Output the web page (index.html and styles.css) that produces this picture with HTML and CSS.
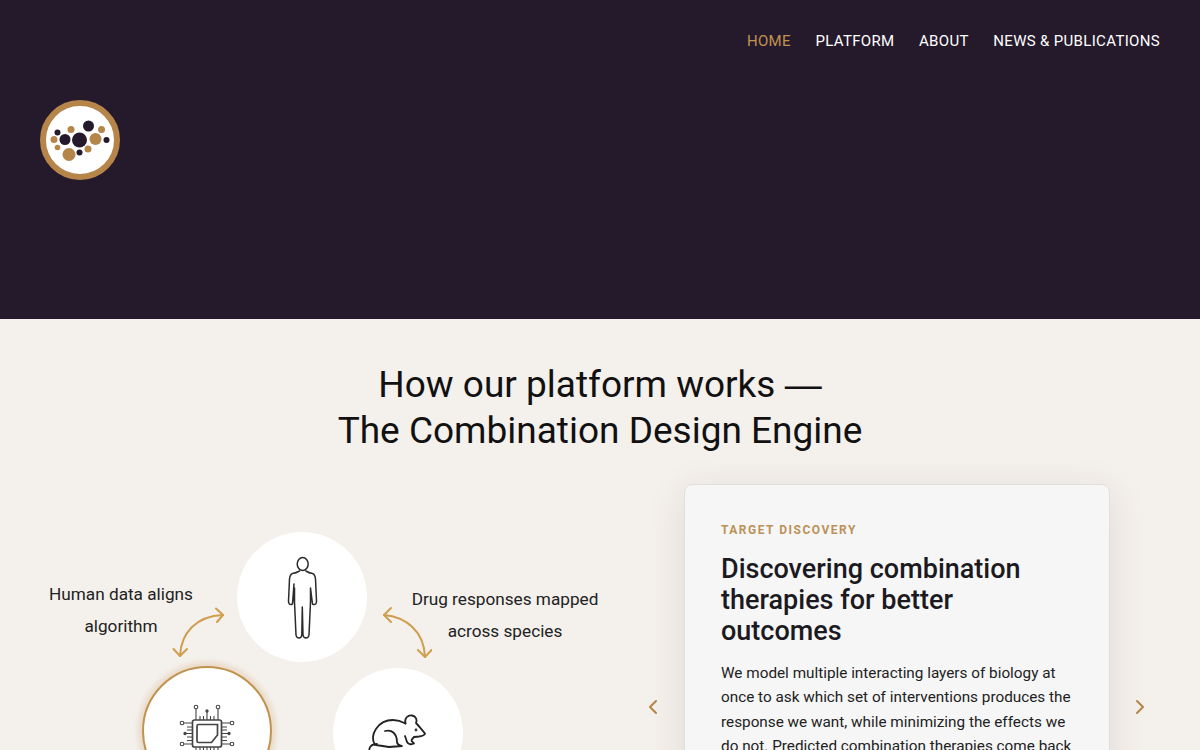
FILE: index.html
```html
<!DOCTYPE html>
<html>
<head>
    <title>How our platform works</title>
    <link rel="stylesheet" href="styles.css">
</head>
<body>
    <header class="site-header">
        <nav class="main-nav">
            <a class="nav-link active" href="#">HOME</a>
            <a class="nav-link" href="#">PLATFORM</a>
            <a class="nav-link" href="#">ABOUT</a>
            <a class="nav-link" href="#">NEWS &amp; PUBLICATIONS</a>
        </nav>
        <svg class="logo" viewBox="0 0 80 80">
            <circle cx="40" cy="40" r="37" fill="#fff" stroke="#b5854a" stroke-width="6"/>
            <circle cx="39.5" cy="40" r="7.5" fill="#251a2b"/>
            <circle cx="48.5" cy="26" r="5.5" fill="#251a2b"/>
            <circle cx="25" cy="39.500" r="5.500" fill="#251a2b"/>
            <circle cx="17.500" cy="32.500" r="3" fill="#251a2b"/>
            <circle cx="66.500" cy="40" r="3" fill="#251a2b"/>
            <circle cx="39.500" cy="52.500" r="3" fill="#251a2b"/>
            <circle cx="31" cy="29.500" r="3.500" fill="#b5854a"/>
            <circle cx="61.500" cy="29.500" r="3.500" fill="#b5854a"/>
            <circle cx="14" cy="39.500" r="3.500" fill="#b5854a"/>
            <circle cx="17.500" cy="47.500" r="2.800" fill="#b5854a"/>
            <circle cx="55.500" cy="39" r="6" fill="#b5854a"/>
            <circle cx="48" cy="49" r="3.500" fill="#b5854a"/>
            <circle cx="29" cy="54.500" r="6.500" fill="#b5854a"/>
        </svg>
    </header>

    <section class="platform">
        <h1 class="platform-title">How our platform works <span class="title-dash">—</span><br>The Combination Design Engine</h1>
        <div class="platform-row">
            <div class="diagram">
                <p class="diagram-label label-left">Human data aligns<br>algorithm</p>
                <p class="diagram-label label-right">Drug responses mapped<br>across species</p>

                <div class="node node-human">
                    <svg class="icon-human" viewBox="0 0 35 87" fill="none" stroke="#2b2b2b" stroke-width="1.500" stroke-linejoin="round" stroke-linecap="round">
                        <ellipse cx="17.700" cy="9" rx="5.500" ry="6.500"/>
                        <path d="M14.500 16 Q11 18 7.500 18.500 Q5 19.500 4.500 24 L3.500 46 Q3.500 50 6.500 49.500 L7.500 49 L9 29 M7.500 49 L9.500 33 L9.500 47 L11 80 Q11.500 83 14 83 Q16.500 83 16.800 80 L17.300 52 L18 80 Q18.500 83 21 83 Q23.500 83 24 80 L25.500 47 L25.500 33 L27.500 49 L28.500 49.500 Q31.500 50 31.500 46 L30.500 24 Q30 19.500 27.500 18.500 Q24 18 20.900 16"/>
                    </svg>
                </div>

                <div class="node node-data">
                    <svg class="icon-chip" viewBox="175 700 64 56" fill="none" stroke="#444" stroke-width="1.100">
                        <rect x="192.500" y="720" width="29" height="27" rx="2" stroke-width="1.700"/>
                        <path d="M198.500 724.500 H217.500 V735 L211.500 742.500 H198.500 Q197 742.500 197 741 V726 Q197 724.500 198.500 724.500 Z" stroke-width="1.700"/>
                        <path d="M196 720 V709 M200 720 V716 M203.500 720 V716 M207 720 V712 M210.500 720 V716 M214 720 V716 M218 720 V709"/>
                        <path d="M196 747 V753 M200 747 V751 M203.500 747 V751 M207 747 V751 M210.500 747 V751 M214 747 V751 M218 747 V753"/>
                        <path d="M192.500 723 H184 M192.500 727 H187 M192.500 730 H187 M192.500 733.500 H186 M192.500 737 H187 M192.500 740.500 H187 M192.500 744 H184"/>
                        <path d="M221.500 723 H230 M221.500 727 H227 M221.500 730 H227 M221.500 733.500 H228 M221.500 737 H227 M221.500 740.500 H227 M221.500 744 H230"/>
                        <circle cx="196" cy="707" r="1.800"/>
                        <circle cx="207" cy="711" r="1.100" fill="#444"/>
                        <circle cx="218" cy="707" r="1.800"/>
                        <circle cx="182" cy="723" r="1.800"/>
                        <circle cx="182" cy="744" r="1.800"/>
                        <circle cx="185" cy="733.500" r="1.100" fill="#444"/>
                        <circle cx="232" cy="723" r="1.800"/>
                        <circle cx="232" cy="744" r="1.800"/>
                        <circle cx="229" cy="733.500" r="1.100" fill="#444"/>
                    </svg>
                </div>

                <div class="node node-species">
                    <svg class="icon-mouse" viewBox="365 710 66 44" fill="none" stroke="#222" stroke-width="1.800" stroke-linecap="round" stroke-linejoin="round">
                        <path d="M375 745 C369 735 378 720 393 720 C397 720 401 721 405.500 723.500"/>
                        <path d="M405.500 723.500 C404 718 408 715 412 715.500 C416 716 417.500 720 416 723 C419 726 422 730 425 733.500 C425 735 422 736 419 736.500 L414 737 C411 740 411 741 412.500 742 L414 743.500 C411 745 408 744 407 742 L405 736"/>
                        <path d="M385 731 C392 729 397 734 397 742 C397 745 399 745 402 746 L389 747"/>
                        <path d="M376 745 L389 747 M377 744 C371 744 368 748 370 752"/>
                        <circle cx="416" cy="730" r="0.500"/>
                    </svg>
                </div>

                <svg class="arrow arrow-left" viewBox="0 0 56 56" fill="none" stroke="#cf9e4e" stroke-width="2" stroke-linecap="round" stroke-linejoin="round">
                    <path d="M8 52 C9 29 24 12 51 11"/>
                    <path d="M1.500 45 L8 52 L15 45"/>
                    <path d="M44 4.500 L51 11 L45 18"/>
                </svg>
                <svg class="arrow arrow-right" viewBox="0 0 50 56" fill="none" stroke="#cf9e4e" stroke-width="2" stroke-linecap="round" stroke-linejoin="round">
                    <path d="M2 10 C24 12 42 26 43 52"/>
                    <path d="M9 3 L2 10 L9 17"/>
                    <path d="M36 45 L43 52 L49.500 45"/>
                </svg>
            </div>

            <div class="carousel">
                <svg class="chevron" viewBox="0 0 16 16" fill="none" stroke="#b5854a" stroke-width="2" stroke-linecap="round" stroke-linejoin="round"><path d="M11 2 L5 8 L11 14"/></svg>
                <article class="card">
                    <div class="card-tag">TARGET DISCOVERY</div>
                    <h2 class="card-title">Discovering combination therapies for better outcomes</h2>
                    <p class="card-text">We model multiple interacting layers of biology at once to ask which set of interventions produces the response we want, while minimizing the effects we do not. Predicted combination therapies come back</p>
                </article>
                <svg class="chevron" viewBox="0 0 16 16" fill="none" stroke="#b5854a" stroke-width="2" stroke-linecap="round" stroke-linejoin="round"><path d="M4 2 L10 8 L4 14"/></svg>
            </div>
        </div>
    </section>
</body>
</html>
```

FILE: styles.css
```css
html, body {
    margin: 0;
    height: 750px;
    overflow: hidden;
}
body {
    font-family: Roboto, "Liberation Sans", sans-serif;
    background-color: #f4f0ec;
    color: #1c1a1f;
}
.site-header {
    background-color: #251a2b;
    height: 319px;
    padding: 0 40px;
    box-sizing: border-box;
}
.main-nav {
    display: flex;
    justify-content: flex-end;
    gap: 24.5px;
    padding-top: 32px;
    height: 69px;
    box-sizing: border-box;
}
.nav-link {
    color: #fff;
    font-size: 15px;
    line-height: 19px;
    letter-spacing: 0.33px;
    text-decoration: none;
}
.nav-link.active {
    color: #c2924f;
}
.logo {
    display: block;
    width: 80px;
    height: 80px;
    margin-top: 31px;
}
.platform-title {
    margin: 0;
    padding-top: 43px;
    font-size: 37px;
    line-height: 46px;
    font-weight: normal;
    text-align: center;
    color: #111;
}
.title-dash {
    font-family: "Liberation Sans", sans-serif;
}
.platform-row {
    display: flex;
    padding: 0 51px 0 40px;
    margin-top: 30px;
}
.diagram {
    position: relative;
    flex: 0 0 565px;
    height: 300px;
}
.diagram-label {
    position: absolute;
    margin: 0;
    font-size: 17.2px;
    line-height: 32px;
    text-align: center;
    color: #222;
}
.label-left {
    left: 0;
    top: 94px;
    width: 162px;
}
.label-right {
    left: 360px;
    top: 99px;
    width: 210px;
}
.node {
    position: absolute;
    width: 130px;
    height: 130px;
    border-radius: 50%;
    background-color: #fff;
    display: flex;
    justify-content: center;
    box-sizing: border-box;
}
.node-human {
    left: 197px;
    top: 48px;
    align-items: center;
}
.node-data {
    left: 102px;
    top: 182px;
    border: 2px solid #c2924f;
    box-shadow: 0 0 5px 4px rgba(194,146,79,0.22);
}
.node-species {
    left: 293px;
    top: 184px;
}
.icon-human {
    width: 35px;
    height: 87px;
    margin-top: 3px;
}
.icon-chip {
    position: absolute;
    left: 31px;
    top: 32px;
    width: 64px;
    height: 56px;
}
.icon-mouse {
    position: absolute;
    left: 32px;
    top: 42px;
    width: 66px;
    height: 44px;
}
.arrow {
    position: absolute;
}
.arrow-left {
    left: 132px;
    top: 120px;
    width: 56px;
    height: 56px;
}
.arrow-right {
    left: 342px;
    top: 121px;
    width: 50px;
    height: 56px;
}
.carousel {
    flex: 1;
    display: flex;
    align-items: center;
    gap: 23px;
    padding-left: 40px;
}
.chevron {
    flex: 0 0 16px;
    width: 16px;
    height: 16px;
}
.card {
    flex: 0 0 426px;
    min-height: 446px;
    box-sizing: border-box;
    padding: 36px;
    background-color: #f6f6f7;
    border: 1px solid #e2e0dd;
    border-radius: 8px;
    box-shadow: 0 8px 40px rgba(60,40,20,0.10);
}
.card-tag {
    font-size: 12px;
    line-height: 18px;
    font-weight: bold;
    letter-spacing: 1.5px;
    color: #bb9257;
}
.card-title {
    margin: 15px 0 0;
    font-size: 27px;
    line-height: 31px;
    font-weight: 500;
    color: #1c1a1f;
}
.card-text {
    margin: 14px 0 0;
    font-size: 15.3px;
    line-height: 24.3px;
    color: #222;
}
```
